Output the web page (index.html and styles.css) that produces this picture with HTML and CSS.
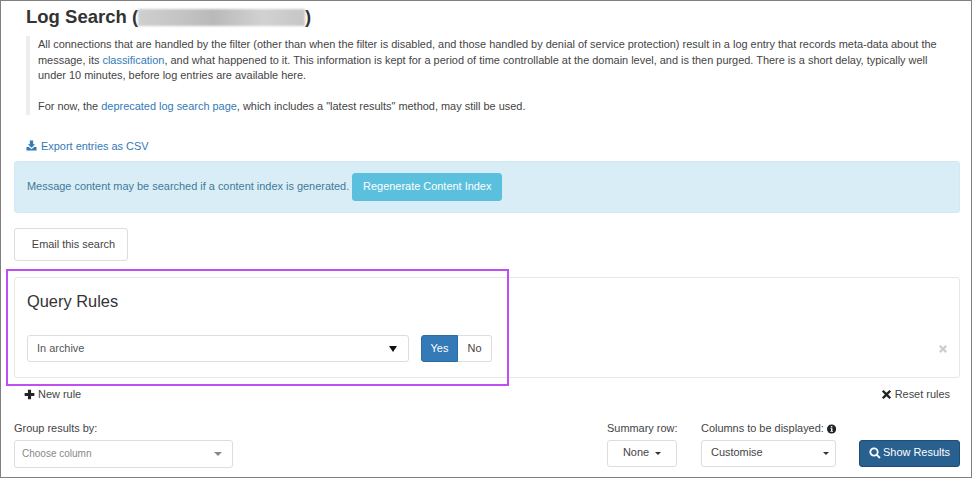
FILE: index.html
```html
<!DOCTYPE html>
<html lang="en">
<head>
<meta charset="utf-8">
<title>Log Search</title>
<link rel="stylesheet" href="styles.css">
</head>
<body>
<div class="frame">
  <h1 class="title">Log Search (<span class="redacted"></span>)</h1>
  <blockquote class="intro">
    <p>All connections that are handled by the filter (other than when the filter is disabled, and those handled by denial of service protection) result in a log entry that records meta-data about the message, its <a href="#">classification</a>, and what happened to it. This information is kept for a period of time controllable at the domain level, and is then purged. There is a short delay, typically well under 10 minutes, before log entries are available here.</p>
    <p>For now, the <a href="#">deprecated log search page</a>, which includes a "latest results" method, may still be used.</p>
  </blockquote>
  <a class="export" href="#">
    <svg class="ico" viewBox="0 0 12 12"><path d="M4.2 0.5h3.6v4h2.2L6 8.4 2 4.5h2.2z"/><path d="M0.5 7.5h2.6L6 10l2.9-2.5h2.6v4h-11z"/></svg>
    Export entries as CSV</a>
  <div class="alert">
    <span>Message content may be searched if a content index is generated.</span>
    <button class="btn btn-info">Regenerate Content Index</button>
  </div>
  <button class="btn btn-default btn-email">Email this search</button>
  <section class="panel">
    <h2 class="panel-title">Query Rules</h2>
    <div class="rule">
      <div class="rule-select"><span>In archive</span><i class="caret caret-big"></i></div>
      <div class="toggle"><span class="toggle-on">Yes</span><span class="toggle-off">No</span></div>
      <svg class="remove" viewBox="0 0 10 10"><path d="M2 0 5 3 8 0 10 2 7 5l3 3-2 2-3-3-3 3-2-2 3-3-3-3z"/></svg>
    </div>
  </section>
  <div class="rule-actions">
    <span class="action"><svg class="ico-sm" viewBox="0 0 12 12"><path d="M4.3 0.7h3.4v3.6h3.6v3.4H7.7v3.6H4.3V7.7H0.7V4.3h3.6z"/></svg>New rule</span>
    <span class="action"><svg class="ico-sm" viewBox="0 0 12 12"><path d="M2.8 1 6 4.2 9.2 1 11 2.8 7.8 6 11 9.2 9.2 11 6 7.8 2.8 11 1 9.2 4.2 6 1 2.8z"/></svg>Reset rules</span>
  </div>
  <div class="controls">
    <div class="field field-group">
      <label>Group results by:</label>
      <div class="select select-muted"><span>Choose column</span><i class="caret caret-gray"></i></div>
    </div>
    <div class="field field-summary">
      <label>Summary row:</label>
      <div class="select select-center"><span>None</span><i class="caret"></i></div>
    </div>
    <div class="field field-columns">
      <label>Columns to be displayed: <svg class="info" viewBox="0 0 12 12"><circle cx="6" cy="6" r="6"/><rect x="5" y="2.2" width="2" height="1.8" fill="#fff"/><path d="M4.4 5h2.7v3.6h.8v1H4.3v-1h.9V6h-.8z" fill="#fff"/></svg></label>
      <div class="select select-columns"><span>Customise</span><i class="caret"></i></div>
    </div>
    <button class="btn btn-primary"><svg class="search" viewBox="0 0 12 12"><circle cx="5" cy="5" r="3.7"/><path d="M7.8 7.8 11 11"/></svg>Show Results</button>
  </div>
  <div class="highlight"></div>
</div>
</body>
</html>
```

FILE: styles.css
```css
* { box-sizing: border-box; }
html, body { margin: 0; padding: 0; background: #fff; }
body { font-family: "Liberation Sans", Arial, sans-serif; font-size: 10.95px; line-height: 15.6px; color: #444; }
a { color: #337ab7; text-decoration: none; }

.frame {
  position: relative;
  width: 972px;
  height: 478px;
  overflow: hidden;
  border: 1px solid #808080;
  padding: 0 11px 0 13px;
}

.title {
  margin: 6px 0 0 12px;
  font-size: 18.5px;
  line-height: 20px;
  font-weight: 700;
  color: #333;
  display: flex;
  align-items: center;
}
.redacted {
  display: inline-block;
  width: 167px;
  height: 17px;
  background: linear-gradient(90deg, #cfcfcf, #c2c2c2 30%, #b9b9b9 45%, #d2d2d2 75%, #c6c6c6);
  filter: blur(1px);
}

.intro {
  margin: 9px 0 0 12px;
  padding: 1px 14px 1px 8px;
  border-left: 4px solid #eee;
  height: 79px;
}
.intro p { margin: 0; }
.intro p + p { margin-top: 15px; }

.export { display: flex; align-items: center; gap: 4px; margin: 24px 0 0 12px; height: 16px; }
.ico { width: 11px; height: 11px; fill: #337ab7; margin-top: -3px; }

.alert {
  display: flex;
  align-items: center;
  gap: 3px;
  margin-top: 6px;
  height: 52px;
  padding: 0 12px;
  background: #d9edf7;
  border: 1px solid #d1e9f2;
  border-radius: 3px;
  color: #3f7a98;
}

.btn {
  font: inherit;
  border-radius: 3px;
  cursor: pointer;
  border: 1px solid transparent;
}
.btn-info { width: 150px; height: 28px; padding: 0; background: #5bc0de; border-color: #5bc0de; color: #fff; }
.btn-default { background: #fff; border-color: #ddd; color: #444; }
.btn-email { display: block; margin-top: 15px; width: 114px; height: 33px; padding: 0 0 0 5px; }
.btn-primary {
  display: flex;
  align-items: center;
  justify-content: center;
  gap: 2px;
  width: 101px;
  height: 27px;
  margin-left: 23px;
  padding: 0;
  background: #286090;
  border-color: #204d74;
  color: #fff;
}

.panel {
  margin-top: 16px;
  height: 101px;
  padding: 14px 12px 0;
  border: 1px solid #e6e6e6;
  border-radius: 3px;
}
.panel-title { margin: 0; font-size: 16.4px; line-height: 18px; font-weight: 400; color: #333; }
.rule { display: flex; align-items: center; margin-top: 25px; }
.rule-select {
  display: flex;
  align-items: center;
  justify-content: space-between;
  width: 382px;
  height: 27px;
  padding: 0 10px 0 9px;
  border: 1px solid #ddd;
  border-radius: 3px;
  color: #555;
}
.toggle { display: flex; height: 27px; margin-left: 12px; }
.toggle span { display: flex; align-items: center; justify-content: center; }
.toggle-on { width: 37px; background: #337ab7; border: 1px solid #2e6da4; border-radius: 3px 0 0 3px; color: #fff; }
.toggle-off { width: 34px; border: 1px solid #ddd; border-left: 0; border-radius: 0 3px 3px 0; }
.remove { width: 8px; height: 8px; margin-left: auto; margin-right: 0; fill: #ccc; }

.caret { display: block; width: 0; height: 0; border: 3.5px solid transparent; border-top-color: #333; border-bottom: 0; }
.caret-big { border-width: 6px 4px 0; border-top-color: #111; margin-right: 1px; }
.caret-gray { border-width: 4px 4px 0; border-top-color: #888; }

.rule-actions { display: flex; justify-content: space-between; margin-top: 9px; padding: 0 10px; color: #444; }
.action { display: flex; align-items: center; gap: 3px; }
.ico-sm { width: 11px; height: 11px; fill: #222; }

.controls { display: flex; align-items: flex-end; margin-top: 18px; }
.field { display: flex; flex-direction: column; }
.field label { display: flex; align-items: center; gap: 3px; height: 16px; margin-bottom: 3px; color: #444; white-space: nowrap; }
.field-group { width: 219px; margin-right: auto; }
.field-summary { width: 70px; margin-right: 24px; }
.field-columns { width: 135px; }
.select {
  display: flex;
  align-items: center;
  justify-content: space-between;
  height: 27px;
  padding: 0 10px;
  border: 1px solid #ddd;
  border-radius: 3px;
  color: #444;
}
.select-muted { height: 28px; margin-bottom: -1px; padding: 0 10px 0 7px; color: #888; font-size: 10px; }
.select-center { justify-content: center; gap: 6px; }
.select-columns { padding: 0 6px 0 9px; }
.info { width: 10px; height: 10px; fill: #222; }
.search { width: 12px; height: 12px; fill: none; stroke: #fff; stroke-width: 1.8; }

.highlight {
  position: absolute;
  left: 5px;
  top: 268px;
  width: 503px;
  height: 117px;
  border: 2px solid #bf4ff5;
  pointer-events: none;
}
```
